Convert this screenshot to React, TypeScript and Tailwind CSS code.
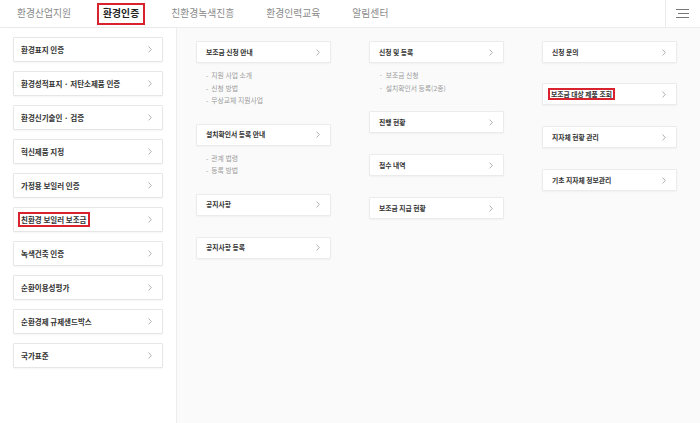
import React from "react";

const navItems = ["환경산업지원", "환경인증", "친환경녹색진흥", "환경인력교육", "알림센터"];

const leftItems = [
  "환경표지 인증",
  "환경성적표지 · 저탄소제품 인증",
  "환경신기술인 · 검증",
  "혁신제품 지정",
  "가정용 보일러 인증",
  "친환경 보일러 보조금",
  "녹색건축 인증",
  "순환이용성평가",
  "순환경제 규제샌드박스",
  "국가표준",
];

type Block = { title: string; subs?: string[]; dot?: string; mark?: boolean };

const columns: Block[][] = [
  [
    { title: "보조금 신청 안내", subs: ["지원 사업 소개", "신청 방법", "무상교체 지원사업"], dot: "-" },
    { title: "설치확인서 등록 안내", subs: ["관계 법령", "등록 방법"], dot: "-" },
    { title: "공지사항" },
    { title: "공지사항 등록" },
  ],
  [
    { title: "신청 및 등록", subs: ["보조금 신청", "설치확인서 등록(2종)"], dot: "·" },
    { title: "진행 현황" },
    { title: "접수 내역" },
    { title: "보조금 지급 현황" },
  ],
  [
    { title: "신청 문의" },
    { title: "보조금 대상 제품 조회", mark: true },
    { title: "지자체 현황 관리" },
    { title: "기초 지자체 정보관리" },
  ],
];

const Chevron = () => (
  <svg width="4" height="7" viewBox="0 0 4 7" fill="none" className="shrink-0">
    <path d="M0.6 0.6 L3.3 3.5 L0.6 6.4" stroke="#a8a8a8" strokeWidth="0.9" />
  </svg>
);

const Marked = ({ children, className }: { children: React.ReactNode; className: string }) => (
  <span className={`inline-block border-2 border-[#d8232f] leading-none ${className}`}>{children}</span>
);

function gapFor(col: Block[], bi: number) {
  if (bi === 0) return "";
  if (col[bi - 1].subs) return "mt-[17px]";
  if (col[bi].mark) return "mt-[20px]";
  return "mt-[21px]";
}

export default function App() {
  return (
    <div className="w-[700px] h-[423px] overflow-hidden bg-white font-['Noto_Sans_CJK_KR','Noto_Sans',sans-serif] flex flex-col">
      {/* top nav */}
      <header className="h-[28px] shrink-0 flex items-stretch border-b border-[#ececec] bg-white">
        <nav className="flex-1 flex items-center gap-[32px] pl-[17px]">
          {navItems.map((n) =>
            n === "환경인증" ? (
              <span
                key={n}
                className="-mx-[6px] px-[4px] h-[22px] flex items-center border-2 border-[#d8232f] text-[9.8px] font-bold text-[#222]"
              >
                {n}
              </span>
            ) : (
              <span key={n} className="text-[9.8px] text-[#8a8a8a]">
                {n}
              </span>
            )
          )}
        </nav>
        <div className="w-[35px] border-l border-[#ececec] flex flex-col justify-center items-end gap-[3px] pr-[11px]">
          <span className="block w-[13px] h-px bg-[#777]" />
          <span className="block w-[11px] h-px bg-[#777]" />
          <span className="block w-[13px] h-px bg-[#777]" />
        </div>
      </header>

      <div className="flex-1 flex">
        {/* left menu */}
        <aside className="w-[177px] shrink-0 bg-white border-r border-[#ededed] shadow-[1px_0_3px_rgba(0,0,0,0.03)] pt-[9px] pl-[13px] flex flex-col gap-[9px]">
          {leftItems.map((t) => (
            <div
              key={t}
              className="w-[150px] h-[25px] flex items-center justify-between pl-[7px] pr-[10px] bg-white border border-[#e6e6e6] rounded-[1px] shadow-[0_1px_2px_rgba(0,0,0,0.04)]"
            >
              {t === "친환경 보일러 보조금" ? (
                <Marked className="-ml-[3px] px-[1px] py-[1.5px] text-[7.5px] font-bold text-[#333]">{t}</Marked>
              ) : (
                <span className="text-[7.5px] font-bold text-[#333]">{t}</span>
              )}
              <Chevron />
            </div>
          ))}
        </aside>

        {/* sub columns */}
        <main className="flex-1 bg-[#fafafa] pt-[13px] pl-[19px] flex gap-[38px]">
          {columns.map((col, ci) => (
            <div key={ci} className="w-[135px] flex flex-col">
              {col.map((b, bi) => (
                <div key={b.title} className={gapFor(col, bi)}>
                  <div className="h-[22px] flex items-center justify-between pl-[9px] pr-[10px] bg-white border border-[#ebebeb] rounded-[1px] shadow-[0_1px_2px_rgba(0,0,0,0.04)]">
                    {b.mark ? (
                      <Marked className="-ml-[4px] px-[1px] py-[1px] text-[6.8px] font-bold text-[#333]">{b.title}</Marked>
                    ) : (
                      <span className="text-[6.8px] font-bold text-[#333]">{b.title}</span>
                    )}
                    <Chevron />
                  </div>
                  {b.subs && (
                    <ul className="mt-[6px] pl-[10px] flex flex-col">
                      {b.subs.map((s) => (
                        <li key={s} className="h-[12.5px] flex items-center gap-[3px] text-[6.8px] text-[#9a9a9a]">
                          <span>{b.dot}</span>
                          <span>{s}</span>
                        </li>
                      ))}
                    </ul>
                  )}
                </div>
              ))}
            </div>
          ))}
        </main>
      </div>
    </div>
  );
}
